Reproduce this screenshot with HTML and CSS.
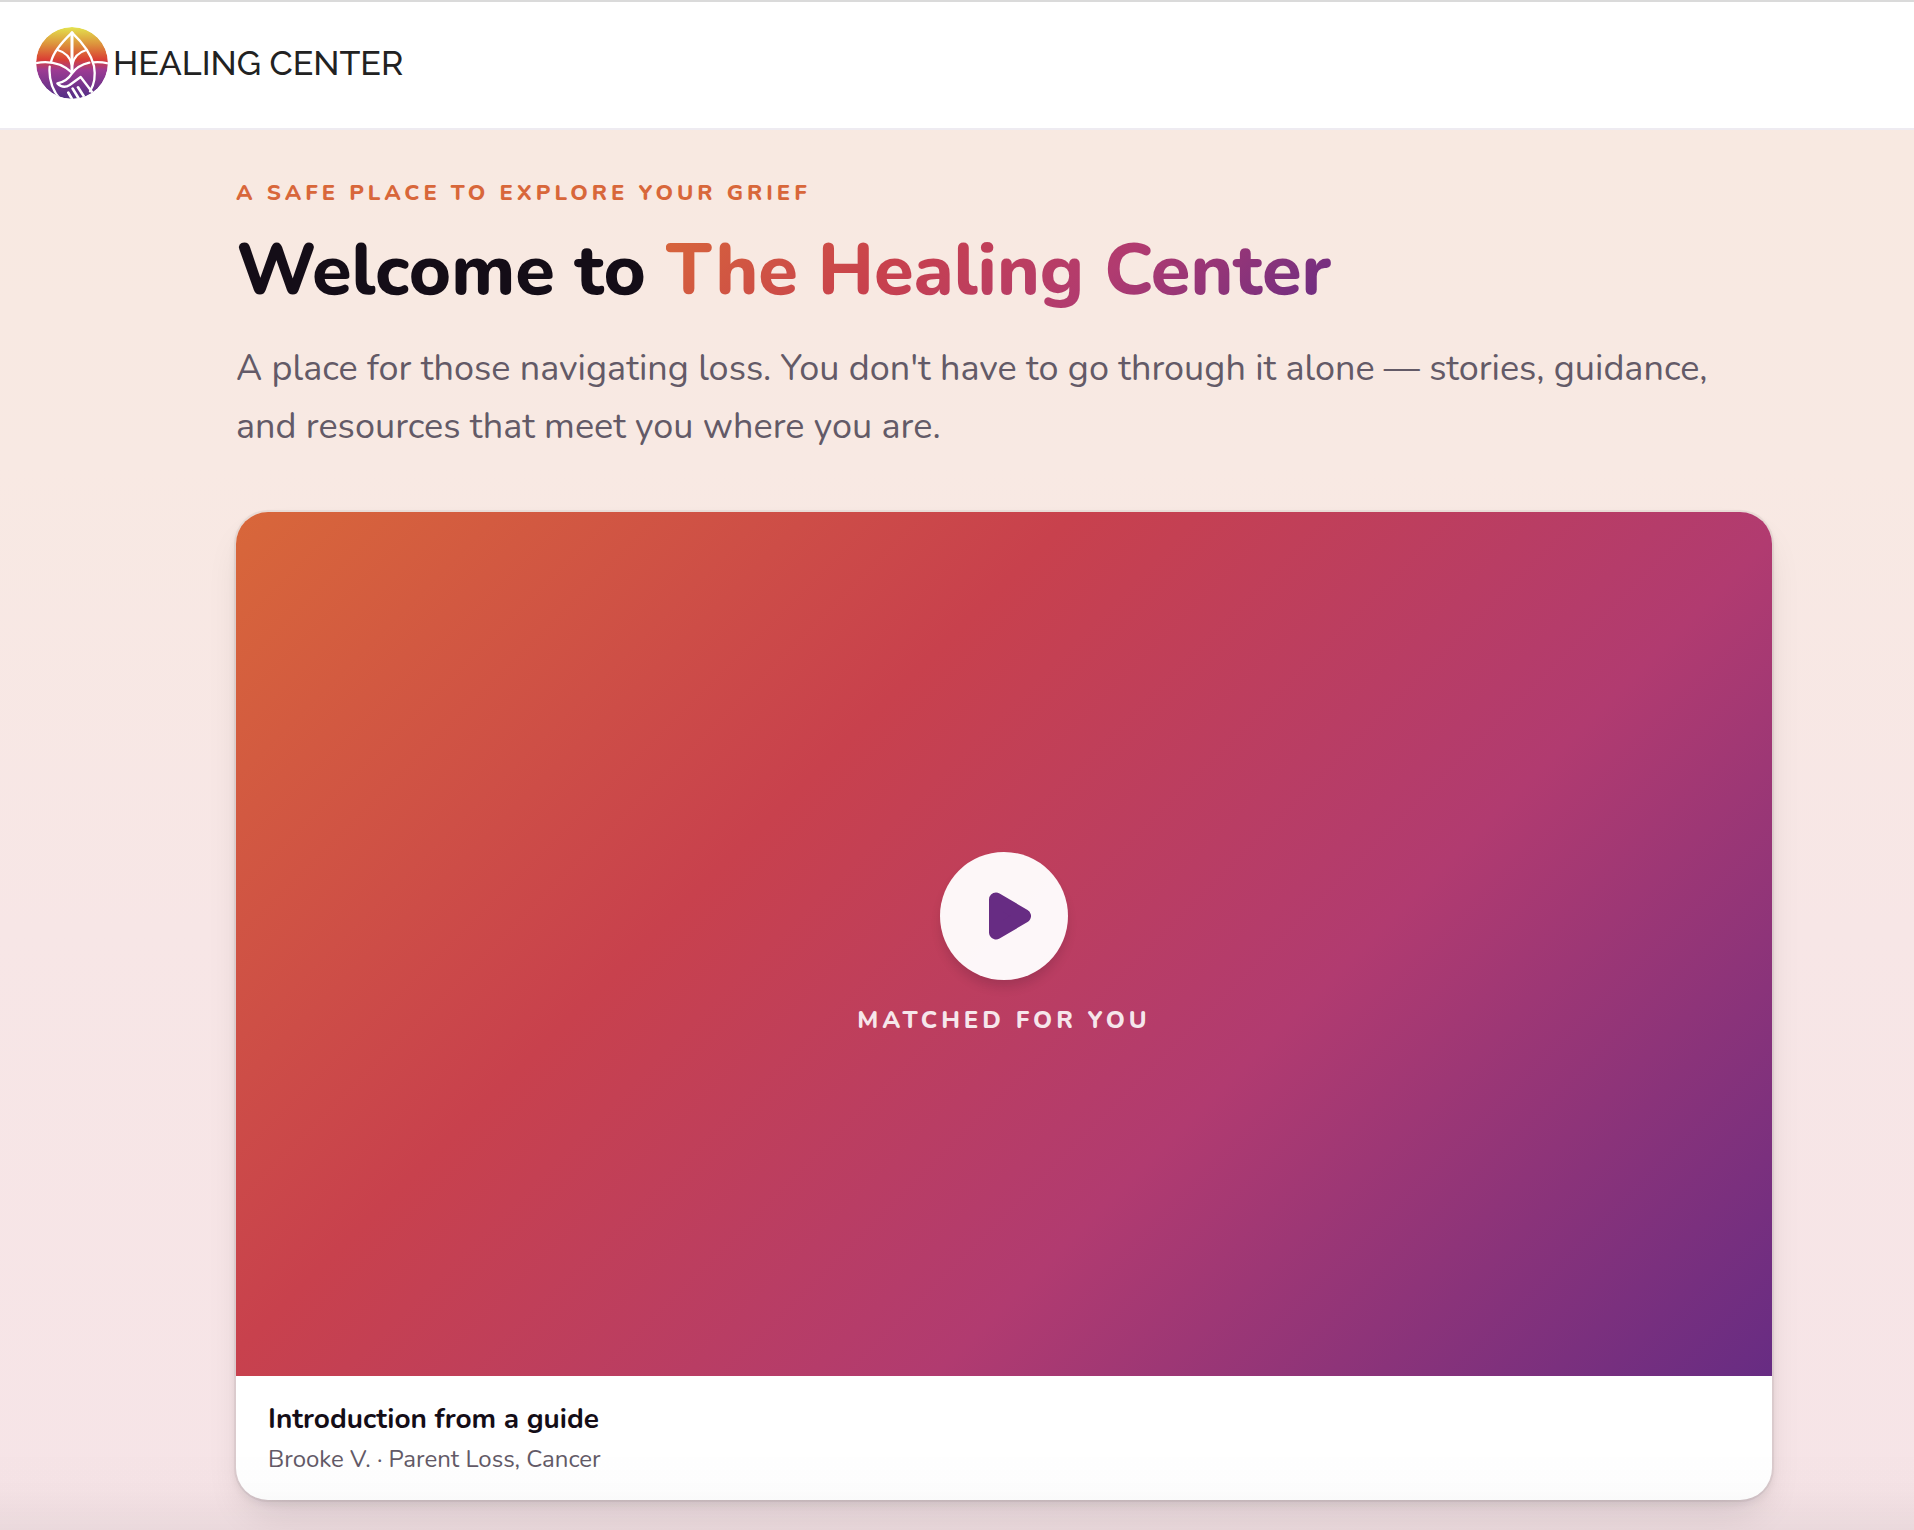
FILE: index.html
```html
<!DOCTYPE html>
<html lang="en">
<head>
<meta charset="utf-8">
<meta name="viewport" content="width=device-width, initial-scale=1">
<title>Healing Center</title>
<link rel="stylesheet" href="styles.css">
</head>
<body>
<header class="site-header">
  <a class="brand" href="#">
    <svg class="brand-mark" viewBox="18 21 216 216" aria-hidden="true">
      <defs>
        <linearGradient id="sunset" x1="0" y1="0" x2="0" y2="1">
          <stop offset="0" stop-color="#e3e34e"/>
          <stop offset=".24" stop-color="#dd923c"/>
          <stop offset=".45" stop-color="#da4034"/>
          <stop offset=".6" stop-color="#9c3b93"/>
          <stop offset="1" stop-color="#512e86"/>
        </linearGradient>
        <clipPath id="disc"><circle cx="126" cy="129" r="108"/></clipPath>
      </defs>
      <g clip-path="url(#disc)">
        <circle cx="126" cy="129" r="108" fill="url(#sunset)"/>
        <g fill="none" stroke="#fff" stroke-width="7" stroke-linecap="round" stroke-linejoin="round">
          <path d="M126 38V156" stroke-width="9"/>
          <path d="M126 38C96 66 70 96 63 126"/>
          <path d="M126 38C160 70 184 104 192 138C198 172 190 198 180 214"/>
          <path d="M83 90C104 96 121 110 126 136C131 110 148 96 169 90"/>
          <path d="M14 130C58 121 96 130 126 158"/>
          <path d="M190 127C206 125 222 127 238 131"/>
          <path d="M59 140C56 176 64 208 92 240"/>
          <path d="M178 128C152 134 136 146 126 160C116 176 100 187 82 190C94 202 108 202 119 195L152 171L188 218"/>
          <path d="M115 218L130 244M128 206L150 242M144 202L166 236" stroke-width="8"/>
        </g>
      </g>
    </svg>
    <span class="brand-name">HEALING CENTER</span>
  </a>
</header>

<main class="page">
  <p class="eyebrow">A safe place to explore your grief</p>
  <h1 class="title">Welcome to <span class="title-accent">The Healing Center</span></h1>
  <p class="lead">A place for those navigating loss. You don't have to go through it alone — stories, guidance, and resources that meet you where you are.</p>

  <article class="video-card">
    <div class="video-media">
      <button class="play" type="button" aria-label="Play introduction">
        <svg class="play-icon" viewBox="0 0 42 48" aria-hidden="true">
          <path d="M7 7.500L35 24L7 40.500Z" fill="currentColor" stroke="currentColor" stroke-width="14" stroke-linejoin="round"/>
        </svg>
      </button>
      <p class="video-tag">Matched for you</p>
    </div>
    <div class="video-info">
      <h2 class="video-title">Introduction from a guide</h2>
      <p class="video-meta">Brooke V. · Parent Loss, Cancer</p>
    </div>
  </article>
</main>
</body>
</html>
```
FILE: styles.css
```css
*,
*::before,
*::after {
  box-sizing: border-box;
}

:root {
  --ink: #140d17;
  --muted: #635a67;
  --orange: #d8673a;
  --red: #c8414d;
  --pink: #b13b70;
  --purple: #672c83;
  --sunset: linear-gradient(135deg, var(--orange) 0%, var(--red) 35%, var(--pink) 65%, var(--purple) 100%);
}

body {
  margin: 0;
  min-height: 100vh;
  font-family: Nunito, "Open Sans", sans-serif;
  color: var(--ink);
  background: linear-gradient(180deg, #f8e9e0 0%, #f8e9e3 30%, #f7e6e6 60%, #f6e4e7 100%);
}

/* soft shade along the lower edge of the window */
body::after {
  content: "";
  position: fixed;
  inset: auto 0 0;
  height: 80px;
  pointer-events: none;
  background: linear-gradient(to top, rgba(20, 13, 23, .05), rgba(20, 13, 23, .01) 50%, rgba(20, 13, 23, 0));
}

h1,
h2,
p {
  margin: 0;
}

.site-header {
  display: flex;
  align-items: center;
  height: 130px;
  padding: 0 36px 4px;
  background: #fff;
  border-top: 2px solid #dadada;
  border-bottom: 2px solid #eeebf1;
}

.brand {
  display: flex;
  align-items: center;
  gap: 5px;
  color: #222;
  text-decoration: none;
}

.brand-mark {
  width: 72px;
  height: 72px;
}

.brand-name {
  font: 500 34px/40px Raleway, Lato, sans-serif;
}

.page {
  padding: 48px 142px 48px 236px;
}

.eyebrow {
  font-size: 22px;
  font-weight: 800;
  line-height: 30px;
  letter-spacing: 4px;
  text-transform: uppercase;
  color: var(--orange);
}

.title {
  margin-top: 24px;
  font-size: 72px;
  font-weight: 800;
  line-height: 76px;
}

.title-accent {
  color: transparent;
  background: var(--sunset);
  background-clip: text;
  -webkit-background-clip: text;
}

.lead {
  margin-top: 32px;
  font-size: 36px;
  line-height: 58px;
  color: var(--muted);
}

.video-card {
  margin-top: 56px;
  overflow: hidden;
  background: #fff;
  border-radius: 32px;
  box-shadow: 0 0 0 2px rgba(20, 13, 23, .05), 0 4px 8px rgba(20, 13, 23, .07), 0 20px 40px -12px rgba(20, 13, 23, .14);
}

.video-media {
  display: flex;
  flex-direction: column;
  align-items: center;
  justify-content: center;
  gap: 24px;
  aspect-ratio: 16 / 9;
  background: var(--sunset);
}

.play {
  display: grid;
  place-items: center;
  width: 128px;
  height: 128px;
  padding: 0 0 0 12px;
  border: 0;
  border-radius: 50%;
  color: var(--purple);
  background: rgba(255, 255, 255, .96);
  box-shadow: 0 8px 12px -2px rgba(20, 13, 23, .16);
  cursor: pointer;
}

.play-icon {
  width: 42px;
  height: 48px;
}

.video-tag {
  font-size: 24px;
  font-weight: 800;
  line-height: 32px;
  letter-spacing: 4px;
  text-transform: uppercase;
  color: rgba(255, 255, 255, .88);
}

.video-info {
  display: grid;
  gap: 4px;
  padding: 24px 32px;
}

.video-title {
  font-size: 28px;
  font-weight: 700;
  line-height: 38px;
}

.video-meta {
  font-size: 24px;
  line-height: 34px;
  color: var(--muted);
}
```
